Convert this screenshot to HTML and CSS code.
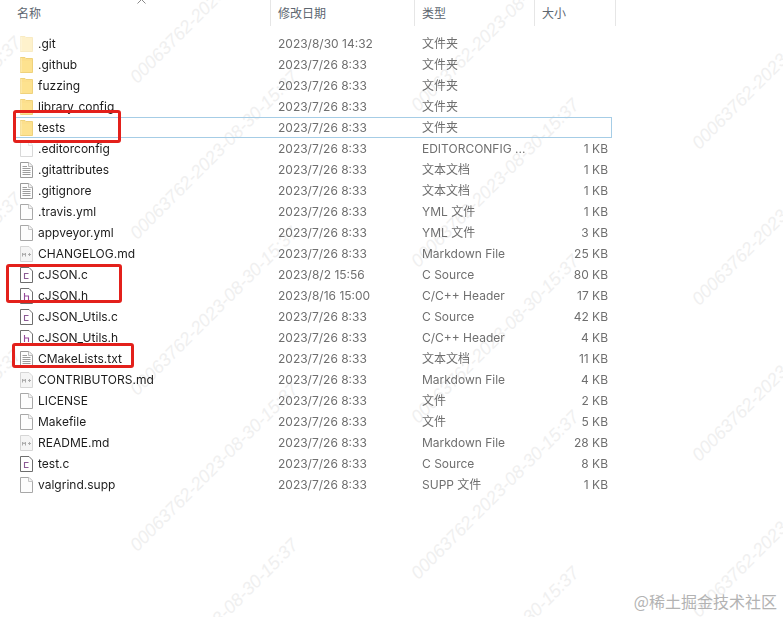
FILE: index.html
```html
<!DOCTYPE html>
<html lang="zh-CN">
<head>
<meta charset="utf-8">
<title>cJSON</title>
<link rel="stylesheet" href="styles.css">
</head>
<body>
<svg class="defs" width="0" height="0" aria-hidden="true">
  <symbol id="folder" viewBox="0 0 13 16"><path d="M.5 .5V15.500H12.500V1.500H6L5 .5Z" fill="#fcdf8c" stroke="#efd27c"/><path d="M1 4H12V15H1Z" fill="#fde28f"/><path d="M1 1V15" stroke="#fdeebb"/></symbol>
  <symbol id="blank" viewBox="0 0 13 16"><path d="M.5.5H9L12.500 4V15.500H.5Z" fill="#fdfdfd" stroke="#a8a8a8"/><path d="M8.500 .5V4.500H12.500" fill="#f4f4f4" stroke="#c6c6c6"/></symbol>
  <symbol id="text" viewBox="0 0 13 16"><path d="M.5.5H9L12.500 4V15.500H.5Z" fill="#fdfdfd" stroke="#9a9a9a"/><path d="M8.500 .5V4.500H12.500" fill="#f4f4f4" stroke="#bbb"/><path d="M2.500 4.500H7M2.500 6.500H10.500M2.500 8.500H10.500M2.500 10.500H10.500M2.500 12.500H10.500" stroke="#9c9c9c" fill="none"/></symbol>
  <symbol id="md" viewBox="0 0 13 16"><path d="M.5.5H9L12.500 4V15.500H.5Z" fill="#f5f5f5" stroke="#d6d6d6"/><path d="M2.500 10.500V7L4 9L5.500 7V10.500M8 8.500H11M9.500 7V10" stroke="#ababab" fill="none"/></symbol>
  <symbol id="csrc" viewBox="0 0 13 16"><path d="M.5.5H9L12.500 4V15.500H.5Z" fill="#fff" stroke="#6e6e6e"/><path d="M8.500 6.500H4.500V11.500H8.500" stroke="#8b5a94" stroke-width="1.100" fill="none"/></symbol>
  <symbol id="hsrc" viewBox="0 0 13 16"><path d="M.5.5H9L12.500 4V15.500H.5Z" fill="#fff" stroke="#6e6e6e"/><path d="M4.500 5V12M4.500 8H8.500V12" stroke="#96499b" stroke-width="1.100" fill="none"/></symbol>
</svg>

<header class="head">
  <div class="head-cell head-name">名称<svg class="sort" width="9" height="5" viewBox="0 0 9 5"><path d="M.5 4.500L4.500 .5L8.500 4.500" fill="none" stroke="#8a8a8a"/></svg></div>
  <div class="head-cell head-date">修改日期</div>
  <div class="head-cell head-type">类型</div>
  <div class="head-cell head-size">大小</div>
</header>

<main class="list">
  <div class="row faded"><div class="name"><svg class="ico"><use href="#folder"/></svg>.git</div><div class="cell">2023/8/30 14:32</div><div class="cell">文件夹</div><div class="cell size"></div></div>
  <div class="row"><div class="name"><svg class="ico"><use href="#folder"/></svg>.github</div><div class="cell">2023/7/26 8:33</div><div class="cell">文件夹</div><div class="cell size"></div></div>
  <div class="row"><div class="name"><svg class="ico"><use href="#folder"/></svg>fuzzing</div><div class="cell">2023/7/26 8:33</div><div class="cell">文件夹</div><div class="cell size"></div></div>
  <div class="row"><div class="name"><svg class="ico"><use href="#folder"/></svg>library_config</div><div class="cell">2023/7/26 8:33</div><div class="cell">文件夹</div><div class="cell size"></div></div>
  <div class="row selected"><div class="name"><svg class="ico"><use href="#folder"/></svg>tests</div><div class="cell">2023/7/26 8:33</div><div class="cell">文件夹</div><div class="cell size"></div></div>
  <div class="row faded-icon"><div class="name"><svg class="ico"><use href="#blank"/></svg>.editorconfig</div><div class="cell">2023/7/26 8:33</div><div class="cell">EDITORCONFIG ...</div><div class="cell size">1 KB</div></div>
  <div class="row"><div class="name"><svg class="ico"><use href="#text"/></svg>.gitattributes</div><div class="cell">2023/7/26 8:33</div><div class="cell">文本文档</div><div class="cell size">1 KB</div></div>
  <div class="row"><div class="name"><svg class="ico"><use href="#text"/></svg>.gitignore</div><div class="cell">2023/7/26 8:33</div><div class="cell">文本文档</div><div class="cell size">1 KB</div></div>
  <div class="row"><div class="name"><svg class="ico"><use href="#blank"/></svg>.travis.yml</div><div class="cell">2023/7/26 8:33</div><div class="cell">YML 文件</div><div class="cell size">1 KB</div></div>
  <div class="row"><div class="name"><svg class="ico"><use href="#blank"/></svg>appveyor.yml</div><div class="cell">2023/7/26 8:33</div><div class="cell">YML 文件</div><div class="cell size">3 KB</div></div>
  <div class="row"><div class="name"><svg class="ico"><use href="#md"/></svg>CHANGELOG.md</div><div class="cell">2023/7/26 8:33</div><div class="cell">Markdown File</div><div class="cell size">25 KB</div></div>
  <div class="row"><div class="name"><svg class="ico"><use href="#csrc"/></svg>cJSON.c</div><div class="cell">2023/8/2 15:56</div><div class="cell">C Source</div><div class="cell size">80 KB</div></div>
  <div class="row"><div class="name"><svg class="ico"><use href="#hsrc"/></svg>cJSON.h</div><div class="cell">2023/8/16 15:00</div><div class="cell">C/C++ Header</div><div class="cell size">17 KB</div></div>
  <div class="row"><div class="name"><svg class="ico"><use href="#csrc"/></svg>cJSON_Utils.c</div><div class="cell">2023/7/26 8:33</div><div class="cell">C Source</div><div class="cell size">42 KB</div></div>
  <div class="row"><div class="name"><svg class="ico"><use href="#hsrc"/></svg>cJSON_Utils.h</div><div class="cell">2023/7/26 8:33</div><div class="cell">C/C++ Header</div><div class="cell size">4 KB</div></div>
  <div class="row"><div class="name"><svg class="ico"><use href="#text"/></svg>CMakeLists.txt</div><div class="cell">2023/7/26 8:33</div><div class="cell">文本文档</div><div class="cell size">11 KB</div></div>
  <div class="row"><div class="name"><svg class="ico"><use href="#md"/></svg>CONTRIBUTORS.md</div><div class="cell">2023/7/26 8:33</div><div class="cell">Markdown File</div><div class="cell size">4 KB</div></div>
  <div class="row"><div class="name"><svg class="ico"><use href="#blank"/></svg>LICENSE</div><div class="cell">2023/7/26 8:33</div><div class="cell">文件</div><div class="cell size">2 KB</div></div>
  <div class="row"><div class="name"><svg class="ico"><use href="#blank"/></svg>Makefile</div><div class="cell">2023/7/26 8:33</div><div class="cell">文件</div><div class="cell size">5 KB</div></div>
  <div class="row"><div class="name"><svg class="ico"><use href="#md"/></svg>README.md</div><div class="cell">2023/7/26 8:33</div><div class="cell">Markdown File</div><div class="cell size">28 KB</div></div>
  <div class="row"><div class="name"><svg class="ico"><use href="#csrc"/></svg>test.c</div><div class="cell">2023/7/26 8:33</div><div class="cell">C Source</div><div class="cell size">8 KB</div></div>
  <div class="row"><div class="name"><svg class="ico"><use href="#blank"/></svg>valgrind.supp</div><div class="cell">2023/7/26 8:33</div><div class="cell">SUPP 文件</div><div class="cell size">1 KB</div></div>
</main>

<div class="marks" aria-hidden="true">
  <div class="mark-col col-a"><span class="mark">00063762-2023-08-30-15:37</span><span class="mark">00063762-2023-08-30-15:37</span><span class="mark">00063762-2023-08-30-15:37</span><span class="mark">00063762-2023-08-30-15:37</span></div>
  <div class="mark-col col-b"><span class="mark">00063762-2023-08-30-15:37</span><span class="mark">00063762-2023-08-30-15:37</span><span class="mark">00063762-2023-08-30-15:37</span><span class="mark">00063762-2023-08-30-15:37</span><span class="mark">00063762-2023-08-30-15:37</span></div>
  <div class="mark-col col-c"><span class="mark">00063762-2023-08-30-15:37</span><span class="mark">00063762-2023-08-30-15:37</span><span class="mark">00063762-2023-08-30-15:37</span><span class="mark">00063762-2023-08-30-15:37</span><span class="mark">00063762-2023-08-30-15:37</span></div>
  <div class="mark-col col-d"><span class="mark">00063762-2023-08-30-15:37</span><span class="mark">00063762-2023-08-30-15:37</span><span class="mark">00063762-2023-08-30-15:37</span><span class="mark">00063762-2023-08-30-15:37</span></div>
</div>

<div class="hl hl-tests"></div>
<div class="hl hl-cjson"></div>
<div class="hl hl-cmake"></div>
<div class="site">@稀土掘金技术社区</div>
</body>
</html>
```

FILE: styles.css
```css
* { box-sizing: border-box; }
html, body { margin: 0; height: 100%; }
body {
  position: relative;
  width: 783px;
  height: 617px;
  overflow: hidden;
  background: #fff;
  font-family: "Inter", "Noto Sans CJK SC", sans-serif;
  font-size: 12px;
}
.defs { position: absolute; }

.head {
  display: grid;
  grid-template-columns: 271px 144px 120px 81px;
  height: 26px;
}
.head-cell {
  position: relative;
  padding: 5px 0 0 7px;
  line-height: 16px;
  color: #5d6670;
  font-family: "Noto Sans CJK SC", sans-serif;
  border-right: 1px solid #e6e6e6;
}
.head-name { padding-left: 17px; }
.sort { position: absolute; left: 137px; top: -1px; }

.list {
  position: relative;
  z-index: 1;
  display: flex;
  flex-direction: column;
  margin: 7px 0 0 14px;
  width: 598px;
  filter: blur(.25px);
}
.row {
  display: grid;
  grid-template-columns: 257px 144px 120px 77px;
  height: 21px;
  align-items: center;
  line-height: 21px;
  color: #6f6f6f;
}
.selected { outline: 1px solid #a6cde6; outline-offset: -1px; }
.name {
  display: flex;
  align-items: center;
  gap: 5px;
  padding-left: 6px;
  color: #1c1c1c;
  white-space: nowrap;
}
.ico { width: 13px; height: 16px; flex: none; }
.faded .ico, .faded-icon .ico { opacity: .45; }
.cell {
  padding-left: 7px;
  white-space: nowrap;
}
.size { padding: 0 4px 0 0; text-align: right; }

.marks {
  position: absolute;
  inset: 0;
  display: flex;
  overflow: hidden;
  pointer-events: none;
}
.mark-col {
  display: flex;
  flex-direction: column;
  flex: none;
  width: 281px;
}
.col-a { margin-left: -137px; margin-top: -103px; width: 277px; }
.col-b { margin-top: -69px; }
.col-c { margin-top: -41px; }
.col-d { margin-top: -3px; }
.mark {
  display: block;
  flex: none;
  height: 156px;
  padding-top: 136px;
  line-height: 20px;
  white-space: nowrap;
  font-family: "Liberation Sans", sans-serif;
  font-size: 18px;
  font-style: italic;
  color: #f0f0f0;
  transform: rotate(-45deg);
  transform-origin: 0 100%;
}

.hl {
  position: absolute;
  z-index: 2;
  border: 3px solid #e3201b;
  border-radius: 3px;
}
.hl-tests { left: 13px; top: 110px; width: 108px; height: 33px; }
.hl-cjson { left: 6px; top: 264px; width: 116px; height: 39px; }
.hl-cmake { left: 12px; top: 343px; width: 122px; height: 25px; }

.site {
  position: absolute;
  right: 6px;
  bottom: 6px;
  font-family: "Noto Sans CJK SC", sans-serif;
  font-size: 16px;
  line-height: 20px;
  color: #b3b3b3;
}
```
